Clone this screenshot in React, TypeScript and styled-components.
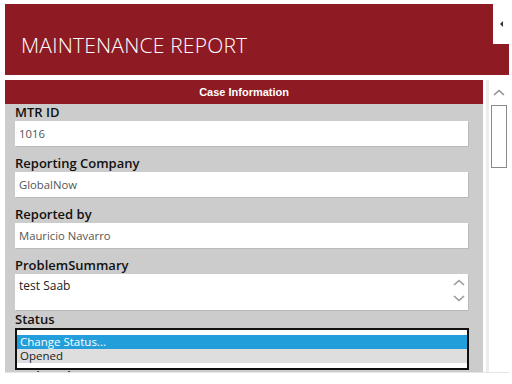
import React from "react";
import styled, { createGlobalStyle } from "styled-components";

const GlobalStyle = createGlobalStyle`
  html, body {
    margin: 0;
    padding: 0;
    background: #ffffff;
    font-family: "Open Sans", "Noto Sans", sans-serif;
  }
`;

const RED = "#8e1a24";

const Frame = styled.div`
  width: 504px;
  height: 384px;
  padding: 4px 0 0 5px;
  display: flex;
  flex-direction: column;
  overflow: hidden;
`;

const Header = styled.header`
  position: relative;
  flex-shrink: 0;
  height: 71px;
  background: ${RED};
  display: flex;
  align-items: flex-end;
  padding: 0 0 19px 16px;
  box-sizing: border-box;
`;

const Title = styled.h1`
  margin: 0;
  color: #ffffff;
  font-family: "Open Sans", sans-serif;
  font-weight: 300;
  font-size: 21px;
  letter-spacing: 0.2px;
  line-height: 22px;
`;

const Toggle = styled.button`
  position: absolute;
  top: 0;
  right: 0;
  width: 16px;
  height: 40px;
  border: none;
  padding: 0;
  background: #ffffff;
  display: flex;
  align-items: center;
  justify-content: center;
  &::before {
    content: "";
    border-top: 3px solid transparent;
    border-bottom: 3px solid transparent;
    border-right: 3px solid #333;
    margin-left: 1px;
  }
`;

const Body = styled.div`
  margin-top: 5px;
  display: flex;
  gap: 3px;
  height: 292px;
  flex-shrink: 0;
  border-bottom: 1px solid #e6e6e6;
`;

const Panel = styled.section`
  width: 481px;
  background: #cccccc;
  overflow: hidden;
  display: flex;
  flex-direction: column;
`;

const SectionBar = styled.div`
  flex-shrink: 0;
  height: 24px;
  background: ${RED};
  color: #ffffff;
  font-family: "Liberation Sans", Arial, sans-serif;
  font-weight: 700;
  font-size: 11px;
  display: flex;
  align-items: center;
  justify-content: center;
`;

const Fields = styled.div`
  flex-shrink: 0;
  padding: 0 15px 0 10px;
  display: flex;
  flex-direction: column;
`;

const Field = styled.div<{ $gap?: number }>`
  display: flex;
  flex-direction: column;
  margin-bottom: ${(p) => p.$gap ?? 9}px;
`;

const Label = styled.label`
  font-family: "Open Sans", sans-serif;
  font-weight: 600;
  font-size: 13px;
  line-height: 16px;
  color: #111;
  margin-bottom: 1px;
`;

const Input = styled.div<{ $tall?: boolean }>`
  position: relative;
  height: ${(p) => (p.$tall ? 36 : 25)}px;
  background: #ffffff;
  box-shadow: 1px 1px 0 #b9b9b9;
  box-sizing: border-box;
  padding: ${(p) => (p.$tall ? "3px 4px" : "0 4px")};
  display: flex;
  align-items: ${(p) => (p.$tall ? "flex-start" : "center")};
  font-size: ${(p) => (p.$tall ? 12 : 11.3)}px;
  color: ${(p) => (p.$tall ? "#222" : "#555")};
`;

const Spinner = styled.div`
  position: absolute;
  right: 3px;
  top: 5px;
  display: flex;
  flex-direction: column;
  gap: 9px;
`;

const Select = styled.div`
  height: 42px;
  border: 2px solid #111;
  background: #ffffff;
  box-sizing: border-box;
  padding-top: 5px;
  margin-right: -1px;
`;

const Option = styled.div<{ $active?: boolean }>`
  height: 14px;
  line-height: 14px;
  padding-left: 3px;
  font-size: 11.5px;
  background: ${(p) => (p.$active ? "#229edb" : "#dedede")};
  color: ${(p) => (p.$active ? "#ffffff" : "#222")};
`;

const Scrollbar = styled.div`
  width: 20px;
  border-left: 3px solid #ededed;
  background: #ffffff;
  display: flex;
  flex-direction: column;
  align-items: center;
`;

const ArrowUp = styled.div`
  margin-top: 9px;
  height: 8px;
  display: flex;
`;

const Thumb = styled.div`
  margin-top: 8px;
  width: 16px;
  height: 63px;
  border: 1px solid #8a8a8a;
  box-sizing: border-box;
  background: #fff;
`;

const Chevron = ({ up, color = "#999" }: { up?: boolean; color?: string }) => (
  <svg width="12" height="7" viewBox="0 0 12 7">
    <path
      d={up ? "M1 6 L6 1.5 L11 6" : "M1 1 L6 5.5 L11 1"}
      fill="none"
      stroke={color}
      strokeWidth="1.6"
    />
  </svg>
);

const fields = [
  { label: "MTR ID", value: "1016" },
  { label: "Reporting Company", value: "GlobalNow" },
  { label: "Reported by", value: "Mauricio Navarro" },
];

export default function App() {
  return (
    <>
      <GlobalStyle />
      <Frame>
        <Header>
          <Title>MAINTENANCE REPORT</Title>
          <Toggle aria-label="collapse" />
        </Header>
        <Body>
          <Panel>
            <SectionBar>Case Information</SectionBar>
            <Fields>
              {fields.map((f) => (
                <Field key={f.label}>
                  <Label>{f.label}</Label>
                  <Input>{f.value}</Input>
                </Field>
              ))}
              <Field $gap={1}>
                <Label>ProblemSummary</Label>
                <Input $tall>
                  test Saab
                  <Spinner>
                    <Chevron up />
                    <Chevron />
                  </Spinner>
                </Input>
              </Field>
              <Field $gap={-2}>
                <Label>Status</Label>
                <Select>
                  <Option $active>Change Status...</Option>
                  <Option>Opened</Option>
                </Select>
              </Field>
              <Field>
                <Label>Assigned To:</Label>
              </Field>
            </Fields>
          </Panel>
          <Scrollbar>
            <ArrowUp>
              <Chevron up color="#8f8f8f" />
            </ArrowUp>
            <Thumb />
          </Scrollbar>
        </Body>
      </Frame>
    </>
  );
}
